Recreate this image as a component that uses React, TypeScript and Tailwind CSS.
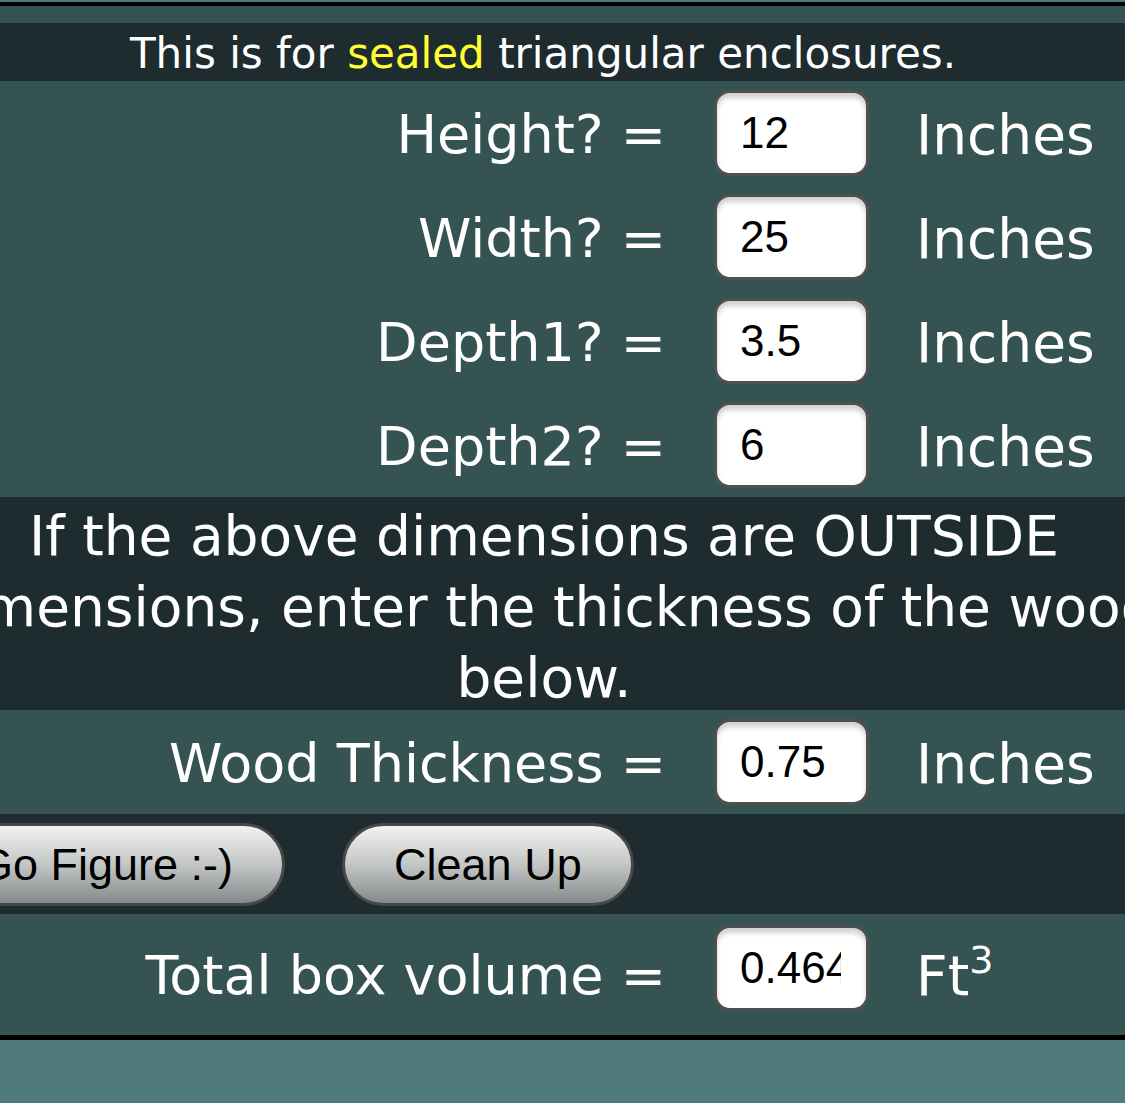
import React from "react";

const labelFont = { fontFamily: '"DejaVu Sans", Verdana, sans-serif' };

function Field({ value }: { value: string }) {
  return (
    <div className="w-[155px] h-[86px] shrink-0 rounded-[16px] border-[3px] border-[#505050] bg-white shadow-[inset_0_5px_5px_rgba(0,0,0,0.18)] flex items-center pl-[23px] pr-[25px]">
      <div className="overflow-hidden w-full">
        <div className="text-[44px] text-black leading-[60px] whitespace-nowrap" style={{ fontFamily: '"Liberation Sans", Arial, sans-serif' }}>
          {value}
        </div>
      </div>
    </div>
  );
}

function Row({ label, value, unit, className = "h-[104px] items-center" }: { label: string; value: string; unit: React.ReactNode; className?: string }) {
  return (
    <div className={`flex bg-[#345352] ${className}`}>
      <div className="w-[666px] shrink-0 text-right text-white text-[54px] leading-none whitespace-nowrap pt-[4px]" style={labelFont}>
        {label}
      </div>
      <div className="ml-[48px]">
        <Field value={value} />
      </div>
      <div className="ml-[47px] text-white text-[55px] leading-none whitespace-nowrap pt-[4px]" style={labelFont}>
        {unit}
      </div>
    </div>
  );
}

function Btn({ children }: { children: React.ReactNode }) {
  return (
    <div className="h-[83px] shrink-0 rounded-full border-[3px] border-[#484848] bg-gradient-to-b from-[#f2f2f2] via-[#c4c6c6] to-[#848a8a] flex items-center justify-center px-[49px]">
      <span className="text-[45px] text-black leading-none whitespace-nowrap" style={{ fontFamily: '"Liberation Sans", Arial, sans-serif' }}>
        {children}
      </span>
    </div>
  );
}

export default function App() {
  return (
    <div className="w-[1125px] h-[1103px] overflow-hidden bg-[#4f7b7a] flex flex-col">
      <div className="h-[2px] bg-[#4f7b7a]" />
      <div className="h-[4px] bg-black" />
      <div className="h-[17px] bg-[#345352]" />
      <div className="h-[58px] bg-[#1e2c2f] flex items-center pt-[4px]">
        <div className="w-[1086px] flex justify-center text-white text-[42px] leading-none whitespace-nowrap" style={labelFont}>
          <span>
            This is for <span className="text-[#ffff33]">sealed</span> triangular enclosures.
          </span>
        </div>
      </div>
      <Row label="Height? =" value="12" unit="Inches" />
      <Row label="Width? =" value="25" unit="Inches" />
      <Row label="Depth1? =" value="3.5" unit="Inches" />
      <Row label="Depth2? =" value="6" unit="Inches" />
      <div className="h-[213px] bg-[#1e2c2f] flex flex-col text-white text-[55px] leading-[71px] pt-[4px]" style={labelFont}>
        <div className="w-[1088px] flex justify-center whitespace-nowrap">If the above dimensions are OUTSIDE</div>
        <div className="w-[1088px] flex justify-center whitespace-nowrap">dimensions, enter the thickness of the wood</div>
        <div className="w-[1088px] flex justify-center whitespace-nowrap">below.</div>
      </div>
      <Row label="Wood Thickness =" value="0.75" unit="Inches" />
      <div className="h-[100px] bg-[#1e2c2f] flex items-center">
        <div className="flex items-center gap-[57px] ml-[-74px]">
          <Btn>Go Figure :-)</Btn>
          <Btn>Clean Up</Btn>
        </div>
      </div>
      <Row
        label="Total box volume ="
        value="0.464"
        className="h-[121px] items-start pt-[11px] [&>div:first-child]:mt-[20px] [&>div:last-child]:mt-[20px]"
        unit={
          <span>
            Ft<span className="text-[38px] relative top-[-22px]">3</span>
          </span>
        }
      />
      <div className="h-[5px] bg-black" />
      <div className="flex-1 bg-[#4f7b7a]" />
    </div>
  );
}
